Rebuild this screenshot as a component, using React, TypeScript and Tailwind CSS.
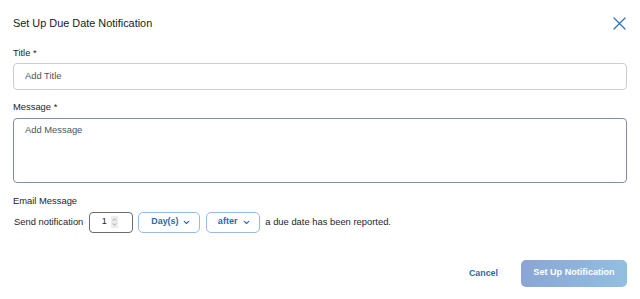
import React from "react";

function Chevron({ className }: { className?: string }) {
  return (
    <svg width="7" height="5" viewBox="0 0 7 5" className={className} fill="none">
      <path d="M1.2 1.3 L3.5 3.5 L5.8 1.3" stroke="currentColor" strokeWidth="1.1" strokeLinecap="round" strokeLinejoin="round" />
    </svg>
  );
}

export default function App() {
  return (
    <div
      className="w-[640px] h-[299px] bg-white flex flex-col overflow-hidden"
      style={{ fontFamily: '"Liberation Sans", Arial, sans-serif' }}
    >
      <div className="mt-[16px] h-[14px] flex items-center justify-between pl-[13px] pr-[14px]">
        <span className="text-[10.9px] leading-[14px] text-[#16191d]">Set Up Due Date Notification</span>
        <svg width="13" height="13" viewBox="0 0 13 13" fill="none" className="text-[#2f72c9]">
          <path d="M1 1 L12 12 M12 1 L1 12" stroke="currentColor" strokeWidth="1.3" strokeLinecap="round" />
        </svg>
      </div>

      <div className="mt-[17px] px-[13px] text-[9.4px] leading-[12px] text-[#1f2329]">Title *</div>
      <div className="mt-[4px] mx-[13px] h-[27px] rounded-[4px] border border-[#c9ced6] flex items-center pl-[11px] text-[9.4px] text-[#4a5462]">
        Add Title
      </div>

      <div className="mt-[10.5px] px-[13px] text-[9.4px] leading-[12px] text-[#1f2329]">Message *</div>
      <div className="mt-[5.5px] mx-[13px] h-[65px] rounded-[4px] border border-[#7c8ea8] pl-[11px] pt-[5px] text-[9.4px] leading-[12px] text-[#4a5462]">
        Add Message
      </div>

      <div className="mt-[11.5px] px-[13px] text-[9.4px] leading-[12px] text-[#1f2329]">Email Message</div>
      <div className="mt-[5px] px-[13px] h-[21px] flex items-center gap-[5.5px] text-[9.4px] text-[#1f2329]">
        <span className="pl-[1px]">Send notification</span>
        <div className="w-[44px] h-[21px] rounded-[4px] border border-[#6b6b6b] flex items-center pl-[12px]">
          <span className="text-[9px] text-[#222]">1</span>
          <span className="ml-[4px] w-[7px] h-[12px] bg-[#ececec] flex flex-col items-center justify-center text-[#9a9a9a]">
            <svg width="5" height="10" viewBox="0 0 5 10" fill="none">
              <path d="M0.8 3.6 L2.5 1.8 L4.2 3.6 M0.8 6.4 L2.5 8.2 L4.2 6.4" stroke="currentColor" strokeWidth="0.8" />
            </svg>
          </span>
        </div>
        <div className="w-[62px] h-[21px] rounded-[5px] border border-[#97bbe6] flex items-center pl-[12px] pr-[9px] justify-between text-[#2b67b5] font-bold text-[8.9px]">
          <span>Day(s)</span>
          <Chevron />
        </div>
        <div className="w-[54px] h-[21px] rounded-[5px] border border-[#97bbe6] flex items-center pl-[11px] pr-[9px] justify-between text-[#2b67b5] font-bold text-[9.1px]">
          <span>after</span>
          <Chevron />
        </div>
        <span>a due date has been reported.</span>
      </div>

      <div className="mt-[27.5px] flex items-center justify-end pr-[13px] gap-[23px]">
        <span className="text-[8.9px] font-bold text-[#2b67b5]">Cancel</span>
        <div className="w-[106px] h-[26.5px] rounded-[5px] bg-gradient-to-r from-[#8aa5d5] to-[#91bfe1] flex items-center justify-center text-white font-bold text-[9.1px]">
          Set Up Notification
        </div>
      </div>
    </div>
  );
}
